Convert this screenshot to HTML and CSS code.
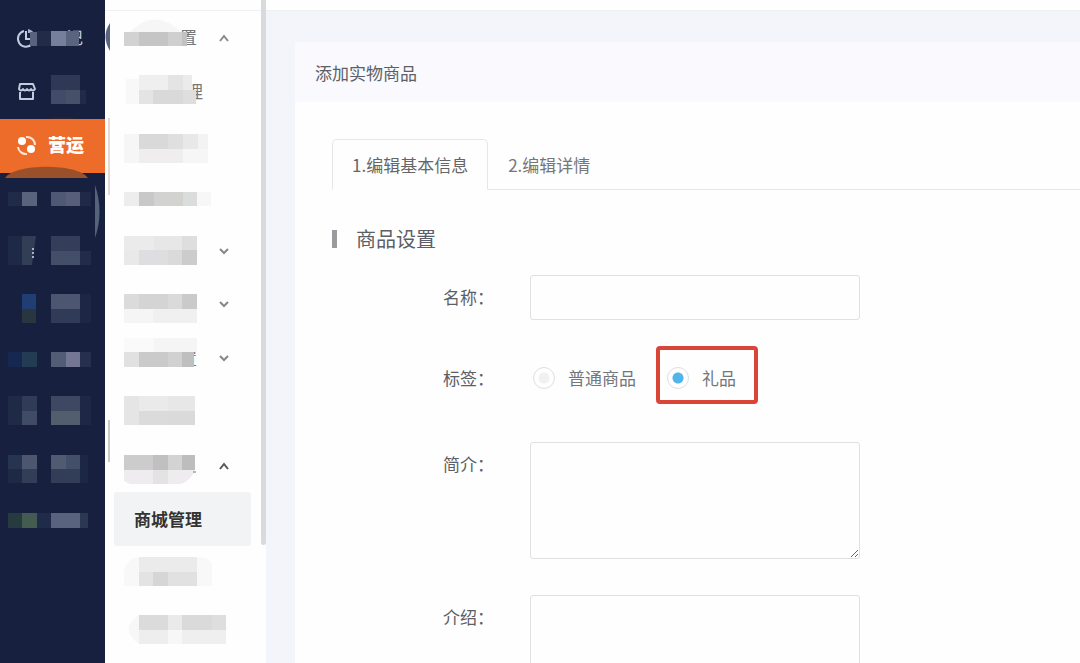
FILE: index.html
```html
<!DOCTYPE html>
<html lang="zh-CN">
<head>
	<meta charset="utf-8">
	<title>添加实物商品</title>
	<meta name="viewport" content="width=device-width, initial-scale=1.0">
	<link rel="stylesheet" href="styles.css">
</head>
<body>
	<nav class="nav">
		<a href="#">
			<svg width="105" height="54" viewBox="0 0 105 54">
				<path d="M24 20a8 8 0 1 0 8 13M26 20v8h5" fill="none" stroke="#c3cbdf" stroke-width="2"/>
				<path d="M28 18q6 1 7 8h-4v-4h-3z" fill="#aab3c9"/>
				<text x="66" y="33" font-size="17" fill="#c3cbdf">记</text>
				<rect x="30" y="21" width="7" height="14" fill="#59637d"/>
				<rect x="37" y="20" width="14" height="15" fill="#222c49"/>
				<rect x="51" y="20" width="15" height="15" fill="#77809a"/>
				<rect x="66" y="20" width="13" height="15" fill="#5b647e"/>
			</svg>
		</a>
		<a href="#">
			<svg width="105" height="54" viewBox="0 0 105 54">
				<path d="M20 27v7h13v-7M20 19h13l2 5q-2 3-4 0q-2 3-4 0q-2 3-4 0q-2 3-4 0z" fill="none" stroke="#c3cbdf" stroke-width="2" stroke-linejoin="round"/>
				<rect x="51" y="10" width="29" height="15" fill="#2e3956"/>
				<rect x="51" y="25" width="15" height="14" fill="#414c68"/>
				<rect x="66" y="25" width="14" height="14" fill="#465069"/>
				<rect x="80" y="25" width="6" height="14" fill="#202b49"/>
				<path d="M46 54q16-4 33 0z" fill="#2c2034"/>
			</svg>
		</a>
		<a href="#" class="active">
			<svg width="105" height="54" viewBox="0 0 105 54">
				<circle cx="22" cy="22" r="4" fill="#fff"/>
				<circle cx="31" cy="30" r="4" fill="#fff"/>
				<path d="M26 18a8 8 0 0 1 9 8M18 28a8 8 0 0 0 9 7" fill="none" stroke="#ffe5d2" stroke-width="2"/>
				<text x="48" y="33" font-size="18" font-weight="900" fill="#fff">营运</text>
				<path d="M5 59C15 44 78 44 88 59z" fill="#9a502a"/>
			</svg>
		</a>
		<a href="#">
			<svg width="105" height="54" viewBox="0 0 105 54">
				<rect x="8" y="19" width="14" height="14" fill="#1f2b48"/>
				<rect x="22" y="19" width="15" height="14" fill="#59647c"/>
				<rect x="51" y="19" width="15" height="14" fill="#4f5974"/>
				<rect x="66" y="19" width="14" height="14" fill="#575e7a"/>
				<rect x="80" y="19" width="11" height="14" fill="#1e2a48"/>
				<path d="M95 12q9 27 0 53z" fill="#56647b"/>
			</svg>
		</a>
		<a href="#">
			<svg width="105" height="54" viewBox="0 0 105 54">
				<rect x="8" y="9" width="14" height="29" fill="#1d2946"/>
				<path d="M22 9h14l-4 29H22z" fill="#323d56"/>
				<path d="M33 21v2M33 25v2M33 29v2" stroke="#a7b0c4" stroke-width="2"/>
				<rect x="51" y="9" width="29" height="15" fill="#343e5a"/>
				<rect x="51" y="24" width="29" height="14" fill="#434e68"/>
				<rect x="80" y="24" width="11" height="14" fill="#202c48"/>
			</svg>
		</a>
		<a href="#">
			<svg width="105" height="54" viewBox="0 0 105 54">
				<rect x="22" y="13" width="14" height="15" fill="#203e73"/>
				<rect x="22" y="28" width="14" height="14" fill="#29363f"/>
				<rect x="51" y="13" width="29" height="15" fill="#4d5671"/>
				<rect x="51" y="28" width="29" height="14" fill="#303b57"/>
				<rect x="80" y="13" width="11" height="29" fill="#1c2744"/>
			</svg>
		</a>
		<a href="#">
			<svg width="105" height="54" viewBox="0 0 105 54">
				<rect x="8" y="17" width="14" height="15" fill="#16284f"/>
				<rect x="22" y="17" width="15" height="15" fill="#233b53"/>
				<rect x="51" y="17" width="15" height="15" fill="#525d75"/>
				<rect x="66" y="17" width="14" height="15" fill="#737793"/>
				<rect x="80" y="17" width="11" height="15" fill="#25304d"/>
			</svg>
		</a>
		<a href="#">
			<svg width="105" height="54" viewBox="0 0 105 54">
				<rect x="8" y="7" width="14" height="29" fill="#1f2a46"/>
				<rect x="22" y="7" width="15" height="15" fill="#303b57"/>
				<rect x="22" y="22" width="15" height="14" fill="#404b65"/>
				<rect x="51" y="7" width="29" height="15" fill="#3f4863"/>
				<rect x="51" y="22" width="29" height="14" fill="#525d6d"/>
				<rect x="80" y="7" width="11" height="29" fill="#1d2845"/>
			</svg>
		</a>
		<a href="#">
			<svg width="105" height="54" viewBox="0 0 105 54">
				<rect x="8" y="12" width="14" height="14" fill="#263450"/>
				<rect x="8" y="26" width="14" height="14" fill="#1e2945"/>
				<rect x="22" y="12" width="15" height="14" fill="#4c576f"/>
				<rect x="22" y="26" width="15" height="14" fill="#323d58"/>
				<rect x="51" y="12" width="15" height="14" fill="#505a70"/>
				<rect x="66" y="12" width="14" height="14" fill="#434e68"/>
				<rect x="51" y="26" width="29" height="14" fill="#323d58"/>
				<rect x="80" y="12" width="8" height="28" fill="#1b2744"/>
			</svg>
		</a>
		<a href="#">
			<svg width="105" height="54" viewBox="0 0 105 54">
				<rect x="8" y="16" width="14" height="15" fill="#273a3d"/>
				<rect x="22" y="16" width="15" height="15" fill="#435b50"/>
				<rect x="37" y="16" width="14" height="15" fill="#1f2b49"/>
				<rect x="51" y="16" width="29" height="15" fill="#5a637d"/>
				<rect x="80" y="16" width="8" height="15" fill="#2c3753"/>
			</svg>
		</a>
	</nav>
	<div class="page">
		<header class="topbar"></header>
		<div class="content">
			<nav class="submenu">
				<a href="#" class="parent">
					<svg width="161" height="53" viewBox="0 0 161 53">
						<path d="M5 12q-9 13 0 28z" fill="#5b6580"/>
						<path d="M25 21Q50-4 76 21z" fill="#f6f6f6"/>
						<text x="75" y="33" font-size="17" fill="#777">置</text>
						<rect x="19" y="21" width="15" height="14" fill="#d2d2d2"/>
						<rect x="34" y="21" width="29" height="14" fill="#c5c5c5"/>
						<rect x="63" y="21" width="14" height="14" fill="#cfcfcf"/>
						<rect x="77" y="21" width="5" height="14" fill="#c2c2c2"/>
						<path class="chevron" d="M115 30l4-5 4 5"/>
					</svg>
				</a>
				<a href="#">
					<svg width="161" height="54" viewBox="0 0 161 54">
						<text x="81" y="34" font-size="17" fill="#777">理</text>
						<rect x="21" y="15" width="13" height="25" fill="#f8f8f8"/>
						<rect x="34" y="11" width="29" height="15" fill="#efefef"/>
						<rect x="63" y="11" width="15" height="15" fill="#e4e4e4"/>
						<rect x="78" y="11" width="9" height="15" fill="#ebebeb"/>
						<rect x="34" y="26" width="14" height="14" fill="#e4e4e4"/>
						<rect x="48" y="26" width="30" height="14" fill="#d9d9d9"/>
						<rect x="78" y="26" width="13" height="14" fill="#dedede"/>
					</svg>
				</a>
				<a href="#">
					<svg width="161" height="54" viewBox="0 0 161 54">
						<path d="M4 0v77" stroke="#c9b3b1"/>
						<rect x="19" y="16" width="15" height="29" fill="#f6f6f6"/>
						<rect x="34" y="16" width="29" height="15" fill="#d9d9d9"/>
						<rect x="63" y="16" width="15" height="15" fill="#dfdfdf"/>
						<rect x="78" y="16" width="15" height="15" fill="#e8e8e8"/>
						<rect x="93" y="16" width="10" height="15" fill="#f3f3f3"/>
						<rect x="34" y="31" width="44" height="14" fill="#efedee"/>
						<rect x="78" y="31" width="25" height="14" fill="#f7f6f6"/>
					</svg>
				</a>
				<a href="#">
					<svg width="161" height="54" viewBox="0 0 161 54">
						<rect x="19" y="20" width="15" height="14" fill="#ededed"/>
						<rect x="34" y="20" width="15" height="14" fill="#c9c8c9"/>
						<rect x="49" y="20" width="29" height="14" fill="#d2d2d0"/>
						<rect x="78" y="20" width="14" height="14" fill="#dadddb"/>
						<rect x="92" y="20" width="14" height="14" fill="#f7f7f7"/>
					</svg>
				</a>
				<a href="#" class="parent">
					<svg width="161" height="53" viewBox="0 0 161 53">
						<rect x="19" y="10" width="30" height="14" fill="#ebebeb"/>
						<rect x="49" y="10" width="28" height="14" fill="#e7e7e7"/>
						<rect x="77" y="10" width="15" height="14" fill="#dedede"/>
						<rect x="19" y="24" width="15" height="15" fill="#eae9ea"/>
						<rect x="34" y="24" width="29" height="15" fill="#dedddf"/>
						<rect x="63" y="24" width="14" height="15" fill="#dadada"/>
						<rect x="77" y="24" width="15" height="15" fill="#ccc"/>
						<path class="chevron" d="M115 23l4 4 4-4"/>
					</svg>
				</a>
				<a href="#" class="parent">
					<svg width="161" height="53" viewBox="0 0 161 53">
						<rect x="19" y="15" width="15" height="15" fill="#dcdbdc"/>
						<rect x="34" y="15" width="29" height="15" fill="#d5d4d5"/>
						<rect x="63" y="15" width="14" height="15" fill="#dadada"/>
						<rect x="77" y="15" width="15" height="15" fill="#cacaca"/>
						<rect x="19" y="30" width="29" height="14" fill="#f5f5f5"/>
						<rect x="48" y="30" width="44" height="14" fill="#f0f0f0"/>
						<path class="chevron" d="M115 23l4 4 4-4"/>
					</svg>
				</a>
				<a href="#" class="parent">
					<svg width="161" height="53" viewBox="0 0 161 53">
						<text x="75" y="33" font-size="17" fill="#777">置</text>
						<rect x="19" y="6" width="30" height="14" fill="#fafafa"/>
						<rect x="49" y="6" width="43" height="14" fill="#f5f5f5"/>
						<rect x="19" y="20" width="15" height="15" fill="#e1e1e1"/>
						<rect x="34" y="20" width="29" height="15" fill="#cacaca"/>
						<rect x="63" y="20" width="14" height="15" fill="#d1d1d1"/>
						<rect x="77" y="20" width="12" height="15" fill="#bfbfbf"/>
						<path class="chevron" d="M115 24l4 4 4-4"/>
					</svg>
				</a>
				<a href="#">
					<svg width="161" height="54" viewBox="0 0 161 54">
						<path d="M4 35v42" stroke="#c8ccc8" stroke-width="2"/>
						<rect x="19" y="11" width="15" height="15" fill="#e5e5e5"/>
						<rect x="34" y="11" width="29" height="15" fill="#eaeaea"/>
						<rect x="63" y="11" width="27" height="15" fill="#e7e7e7"/>
						<rect x="19" y="26" width="15" height="14" fill="#e5e5e5"/>
						<rect x="34" y="26" width="29" height="14" fill="#dcdbdc"/>
						<rect x="63" y="26" width="27" height="14" fill="#dadada"/>
					</svg>
				</a>
				<a href="#" class="parent">
					<svg width="161" height="53" viewBox="0 0 161 53">
						<rect x="19" y="16" width="29" height="15" fill="#cdcccd"/>
						<rect x="48" y="16" width="15" height="15" fill="#c1c0c1"/>
						<rect x="63" y="16" width="14" height="15" fill="#d3d3d3"/>
						<rect x="77" y="16" width="13" height="15" fill="#bdbdbd"/>
						<path d="M19 31h71q-4 10-14 14H25l-6-3z" fill="#eeecee"/>
						<rect x="48" y="31" width="15" height="14" fill="#e4e3e4"/>
						<path d="M88 33h3" stroke="#777"/>
						<path class="chevron dark" d="M115 30l4-5 4 5"/>
					</svg>
				</a>
				<a href="#" class="active">商城管理</a>
				<a href="#">
					<svg width="161" height="54" viewBox="0 0 161 54">
						<path d="M19 40V25q3-13 15-14h58q12 0 15 7v22z" fill="#f8f8f8"/>
						<rect x="34" y="11" width="58" height="15" fill="#ebebeb"/>
						<rect x="34" y="26" width="14" height="14" fill="#e3e3e3"/>
						<rect x="48" y="26" width="15" height="14" fill="#d6d6d6"/>
						<rect x="63" y="26" width="29" height="14" fill="#e1e1e1"/>
					</svg>
				</a>
				<a href="#">
					<svg width="161" height="54" viewBox="0 0 161 54">
						<path d="M34 15q-21 14 0 29z" fill="#f7f7f7"/>
						<rect x="34" y="15" width="29" height="15" fill="#dbdbdb"/>
						<rect x="63" y="15" width="14" height="15" fill="#eaeaea"/>
						<rect x="77" y="15" width="30" height="15" fill="#dadada"/>
						<rect x="107" y="15" width="14" height="15" fill="#dedede"/>
						<rect x="34" y="30" width="29" height="14" fill="#eee"/>
						<rect x="63" y="30" width="14" height="14" fill="#f7f7f7"/>
						<rect x="77" y="30" width="44" height="14" fill="#efefef"/>
					</svg>
				</a>
			</nav>
			<main class="main">
				<div class="card">
					<h1 class="card-title">添加实物商品</h1>
					<div class="card-body">
						<div class="tabs">
							<button type="button" class="tab active">1.编辑基本信息</button>
							<button type="button" class="tab">2.编辑详情</button>
						</div>
						<h2 class="section-title">商品设置</h2>
						<form>
							<div class="form-row">
								<label class="form-label" for="name">名称：</label>
								<input type="text" id="name">
							</div>
							<div class="form-row tags">
								<span class="form-label" id="tagLabel">标签：</span>
								<div class="radios" role="radiogroup" aria-labelledby="tagLabel">
									<label class="radio"><input type="radio" name="tag">普通商品</label>
									<label class="radio marked"><input type="radio" name="tag" checked>礼品</label>
								</div>
							</div>
							<div class="form-row">
								<label class="form-label" for="summary">简介：</label>
								<textarea id="summary"></textarea>
							</div>
							<div class="form-row">
								<label class="form-label" for="intro">介绍：</label>
								<textarea id="intro"></textarea>
							</div>
						</form>
					</div>
				</div>
			</main>
		</div>
		<div class="scroll-thumb"></div>
	</div>
</body>
</html>
```
FILE: styles.css
```css
* {
	box-sizing: border-box;
}

body {
	display: flex;
	height: 100vh;
	margin: 0;
	overflow: hidden;
	background-color: #f4f5fa;
	color: #5c5f66;
	font-family: "Noto Sans CJK SC", "Noto Sans", sans-serif;
	font-size: 17px;
	line-height: 24px;
}

input, textarea, button {
	font: inherit;
	color: inherit;
}

/* main navigation */
.nav {
	flex: none;
	width: 105px;
	padding-top: 11px;
	background-color: #17213f;
}

.nav a {
	display: block;
	height: 54px;
}

.nav svg, .submenu svg {
	display: block;
	overflow: visible;
}

.nav .active {
	background-color: #ee6c29;
}

.page {
	position: relative;
	display: flex;
	flex: 1;
	flex-direction: column;
	min-width: 0;
}

.topbar {
	flex: none;
	height: 11px;
	background-color: #fefefe;
	border-bottom: 1px solid #eff0f1;
}

.content {
	display: flex;
	flex: 1;
	min-height: 0;
}

/* second level menu */
.submenu {
	flex: none;
	width: 161px;
	background-color: #fefefe;
}

.submenu a {
	display: block;
	height: 54px;
}

.submenu .parent {
	height: 53px;
}

.submenu .active {
	margin: 0 15px 0 9px;
	padding-left: 20px;
	border-radius: 3px;
	background-color: #f2f3f5;
	color: #333;
	font-weight: bold;
	line-height: 54px;
	text-decoration: none;
}

.chevron {
	fill: none;
	stroke: #888;
	stroke-width: 2;
}

.chevron.dark {
	stroke: #555;
}

.scroll-thumb {
	position: absolute;
	top: 0;
	left: 156px;
	width: 5px;
	height: 545px;
	border-radius: 0 0 3px 3px;
	background-color: #d9dadd;
}

/* product form */
.main {
	flex: 1;
	min-width: 0;
	padding: 31px 0 0 29px;
}

.card {
	background-color: #fefefe;
}

.card-title {
	margin: 0;
	padding: 19px 20px 17px;
	background-color: #f9f9fe;
	font-size: 17px;
	font-weight: normal;
}

.card-body {
	padding: 37px 0 37px 37px;
}

.tabs {
	display: flex;
	height: 51px;
	border-bottom: 1px solid #e6e7e9;
}

.tab {
	height: 51px;
	padding: 0 19px;
	border: 1px solid transparent;
	background-color: transparent;
	color: #777;
}

.tab.active {
	border-color: #e6e7e9;
	border-bottom-color: #fefefe;
	border-radius: 5px 5px 0 0;
	background-color: #fefefe;
	color: #666;
}

.section-title {
	display: flex;
	align-items: center;
	gap: 19px;
	margin: 34px 0 21px;
	font-size: 20px;
	font-weight: normal;
	line-height: 30px;
}

.section-title::before {
	content: "";
	width: 5px;
	height: 18px;
	background-color: #999b9f;
}

.form-row {
	display: grid;
	grid-template-columns: 162px 330px;
	column-gap: 36px;
	align-items: start;
	margin-bottom: 36px;
}

.form-label {
	line-height: 44px;
	text-align: right;
}

input[type=text], textarea {
	display: block;
	width: 100%;
	height: 45px;
	padding: 8px 12px;
	border: 1px solid #dfe0e2;
	border-radius: 3px;
	background-color: #fefefe;
}

textarea {
	height: 117px;
	resize: both;
}

.tags {
	margin-bottom: 42px;
}

.radios {
	display: flex;
	gap: 31px;
	height: 44px;
	padding-left: 3px;
	align-items: center;
}

.radio {
	position: relative;
	display: flex;
	align-items: center;
	gap: 13px;
	color: #74767c;
}

input[type=radio] {
	appearance: none;
	width: 22px;
	height: 22px;
	margin: 0;
	border: 1px solid #dfdfe3;
	border-radius: 50%;
	background: radial-gradient(circle, #f1f1f3 5px, #fefefe 6px);
}

input[type=radio]:checked {
	background: radial-gradient(circle, #4fb5ec 5px, #fefefe 6px);
}

/* frame around the highlighted option */
.marked::after {
	content: "";
	position: absolute;
	inset: -20px -22px -14px -11px;
	border: 4px solid #da4538;
	border-radius: 4px;
	pointer-events: none;
}
```
